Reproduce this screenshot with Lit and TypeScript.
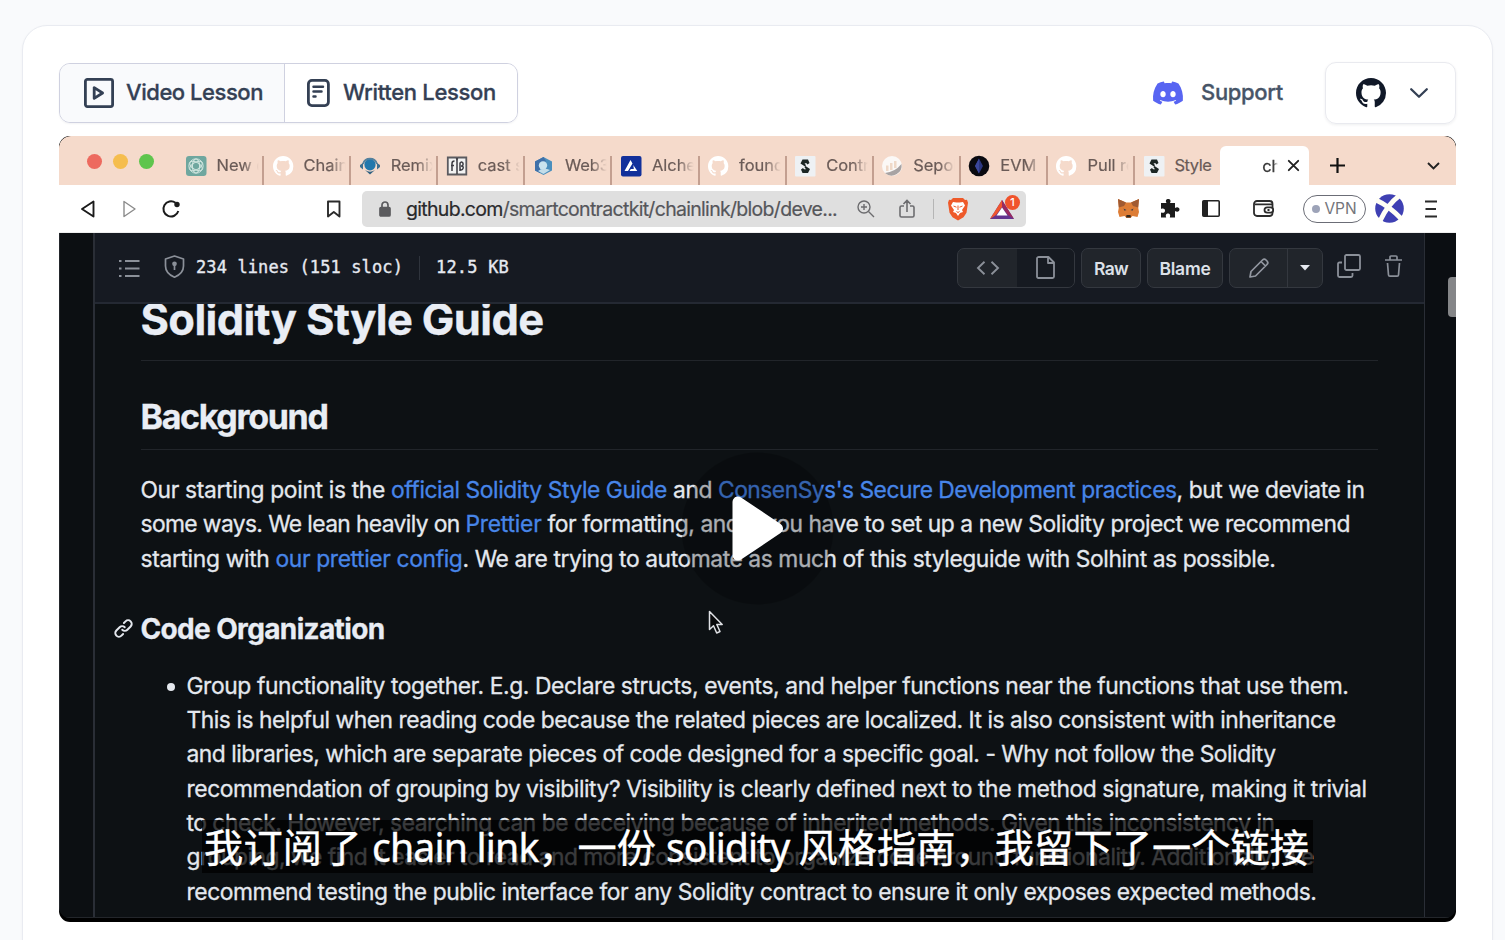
import { LitElement, html, css, svg } from "lit";
import { customElement } from "lit/decorators.js";

const GH =
  "M8 0C3.58 0 0 3.58 0 8c0 3.54 2.29 6.53 5.47 7.59.4.07.55-.17.55-.38 0-.19-.01-.82-.01-1.49-2.01.37-2.53-.49-2.69-.94-.09-.23-.48-.94-.82-1.13-.28-.15-.68-.52-.01-.53.63-.01 1.08.58 1.23.82.72 1.21 1.87.87 2.33.66.07-.52.28-.87.51-1.07-1.78-.2-3.64-.89-3.64-3.95 0-.87.31-1.59.82-2.15-.08-.2-.36-1.02.08-2.12 0 0 .67-.21 2.2.82.64-.18 1.32-.27 2-.27s1.36.09 2 .27c1.53-1.04 2.2-.82 2.2-.82.44 1.1.16 1.92.08 2.12.51.56.82 1.27.82 2.15 0 3.07-1.87 3.75-3.65 3.95.29.25.54.73.54 1.48 0 1.07-.01 1.93-.01 2.2 0 .21.15.46.55.38A8.01 8.01 0 0 0 16 8c0-4.42-3.58-8-8-8z";

const DISCORD =
  "M20.317 4.3698a19.7913 19.7913 0 00-4.8851-1.5152.0741.0741 0 00-.0785.0371c-.211.3753-.4447.8648-.6083 1.2495-1.8447-.2762-3.68-.2762-5.4868 0-.1636-.3933-.4058-.8742-.6177-1.2495a.077.077 0 00-.0785-.037 19.7363 19.7363 0 00-4.8852 1.515.0699.0699 0 00-.0321.0277C.5334 9.0458-.319 13.5799.0992 18.0578a.0824.0824 0 00.0312.0561c2.0528 1.5076 4.0413 2.4228 5.9929 3.0294a.0777.0777 0 00.0842-.0276c.4616-.6304.8731-1.2952 1.226-1.9942a.076.076 0 00-.0416-.1057c-.6528-.2476-1.2743-.5495-1.8722-.8923a.077.077 0 01-.0076-.1277c.1258-.0943.2517-.1923.3718-.2914a.0743.0743 0 01.0776-.0105c3.9278 1.7933 8.18 1.7933 12.0614 0a.0739.0739 0 01.0785.0095c.1202.099.246.1981.3728.2924a.077.077 0 01-.0066.1276 12.2986 12.2986 0 01-1.873.8914.0766.0766 0 00-.0407.1067c.3604.698.7719 1.3628 1.225 1.9932a.076.076 0 00.0842.0286c1.961-.6067 3.9495-1.5219 6.0023-3.0294a.077.077 0 00.0313-.0552c.5004-5.177-.8382-9.6739-3.5485-13.6604a.061.061 0 00-.0312-.0286zM8.02 15.3312c-1.1825 0-2.1569-1.0857-2.1569-2.419 0-1.3332.9555-2.4189 2.157-2.4189 1.2108 0 2.1757 1.0952 2.1568 2.419 0 1.3332-.9555 2.4189-2.1569 2.4189zm7.9748 0c-1.1825 0-2.1569-1.0857-2.1569-2.419 0-1.3332.9554-2.4189 2.1569-2.4189 1.2108 0 2.1757 1.0952 2.1568 2.419 0 1.3332-.946 2.4189-2.1568 2.4189Z";

const favicons: Record<string, unknown> = {
  gpt: svg`<rect width="20.5" height="20" rx="3" fill="#6fa79f"/><g fill="none" stroke="#cfe4de" stroke-width="1.100"><ellipse cx="10" cy="10" rx="3.6" ry="7"/><ellipse cx="10" cy="10" rx="3.6" ry="7" transform="rotate(60 10 10)"/><ellipse cx="10" cy="10" rx="3.6" ry="7" transform="rotate(120 10 10)"/><circle cx="10" cy="10" r="7.2" stroke-width=".9"/></g>`,
  gh: svg`<path transform="scale(1.27)" fill="#fff" d=${GH}/>`,
  remix: svg`<path d="M3 8a7.3 7.3 0 0 1 14 0" fill="none" stroke="#56809c" stroke-width="1.8"/><path d="M0 9l3-2v6.500L0 11zM20 9l-3-2v6.500L20 11z" fill="#3f6f8f"/><circle cx="10" cy="8.800" r="5.600" fill="#2277ac"/><path d="M5 14q5 3.500 10 0l-5 4.500z" fill="#2f6080"/>`,
  foundry: svg`<path d="M.8 1.500h8.500L10 3l.8-1.500h8.500v17H.8z" fill="#f2f2f2" stroke="#5b5a5f" stroke-width="1.800"/><path d="M10 2v16M5 15V7.500q0-2.500 2.500-2.500M4 9.500h3M13 15V7q2.500-2 3 .500t-2 2.500q3 0 2 2.500t-3 .500" fill="none" stroke="#3c3b41" stroke-width="1.500"/>`,
  web3: svg`<path d="M9.500 1l8.500 4.500v9L9.500 19 1 14.500v-9z" fill="#4b8fbd"/><path d="M1 5.500L9.500 1 12 5 6 8v9l-5-2.500z" fill="#3f70a9"/><circle cx="9" cy="9.500" r="4.200" fill="#c9e3ee"/><path d="M4 15q5-4 12-1l-6.500 4z" fill="#c3dde9"/>`,
  alchemy: svg`<rect width="20.500" height="20.500" rx="2" fill="#12309b"/><path d="M9.500 4l2 3.500L7 15H3.500zM12.300 9l4 6H8.500l1.300-2h3z" fill="#fff"/>`,
  sol: svg`<rect width="20.500" height="20.500" rx="1" fill="#eef1f4"/><path d="M7.500 3.500h5.500L14.500 7l-2 1.500-1-1.200H9.500L11 9.300l-1 1.300L5.500 7.500zM13 17H7.500L6 13.500l2-1.500 1 1.200h2L9.500 11.200l1-1.300 4.500 3.100z" fill="#1c2624"/>`,
  sepolia: svg`<circle cx="10" cy="10" r="10" fill="#fbf8f6"/><path d="M3 17q10-1 16.500-9A10 10 0 0 1 3 17z" fill="#a8a3a3"/><path d="M4 9.500h2.500V15H4zM8 7h2.500v7H8zM12 5h2.500v7H12z" fill="#efd9c8"/>`,
  evm: svg`<circle cx="10" cy="10" r="10.300" fill="#0a0a10"/><path d="M10 2.500l4 7.500-4 7.500L6 10z" fill="#2c3780"/><path d="M10 2.500V17.500L6 10z" fill="#3b479b"/>`,
};

const tabs: [string, string][] = [
  ["gpt", "New c"],
  ["gh", "Chain"],
  ["remix", "Remix"],
  ["foundry", "cast s"],
  ["web3", "Web3"],
  ["alchemy", "Alche"],
  ["gh", "found"],
  ["sol", "Contr"],
  ["sepolia", "Sepol"],
  ["evm", "EVM C"],
  ["gh", "Pull re"],
  ["sol", "Style"],
];

const listLines: [string, number][] = [
  ["Group functionality together. E.g. Declare structs, events, and helper functions near the functions that use them.", 1162],
  ["This is helpful when reading code because the related pieces are localized. It is also consistent with inheritance", 1149],
  ["and libraries, which are separate pieces of code designed for a specific goal. - Why not follow the Solidity", 1089],
  ["recommendation of grouping by visibility? Visibility is clearly defined next to the method signature, making it trivial", 1180],
  ["to check. However, searching can be deceiving because of inherited methods. Given this inconsistency in", 1088],
  ["grouping, we find it easier to read and more consistent to organize code around functionality. Additionally, we", 1127],
  ["recommend testing the public interface for any Solidity contract to ensure it only exposes expected methods.", 1130],
];

/** A single run of text tracked so that it fills a given measure. */
const fit = (content: unknown, width: number) =>
  html`<span class="fit" data-w=${width}>${content}</span>`;

@customElement("app-root")
export class AppRoot extends LitElement {
  static styles = css`
    :host { display: block; height: 940px; overflow: hidden; background: #f9fafc; font-family: Inter, "Liberation Sans", sans-serif; }
    * { box-sizing: border-box; }
    svg { display: block; flex: none; overflow: visible; }
    .fit { display: inline-block; white-space: pre; }
    .card { margin: 25px 12px 0 22px; height: 960px; background: #fff; border: 1px solid #e9ebf1; border-radius: 25px; padding: 36px 36px 0; box-shadow: 0 1px 3px rgba(16, 24, 40, 0.04); }
    .bar { display: flex; justify-content: space-between; align-items: center; height: 62px; color: #344054; font-size: 22px; font-weight: 500; }
    .bar .fit { padding-bottom: 2px; -webkit-text-stroke: 0.300px currentColor; }
    .group { display: flex; height: 60px; width: 459px; border: 1px solid #cfd1e0; border-radius: 11px; overflow: hidden; box-shadow: 0 1px 2px rgba(16, 24, 40, 0.05); }
    .seg { display: flex; align-items: center; padding-left: 24px; gap: 12px; width: 225px; background: #f9fafc; border-right: 1px solid #cfd1e0; }
    .seg.alt { background: #fff; border: 0; width: auto; flex: 1; padding-left: 20.500px; gap: 13.500px; }
    .right { display: flex; align-items: center; }
    .support { display: flex; align-items: center; gap: 18px; margin-right: 42px; color: #475467; }
    .ghbtn { width: 131px; height: 62px; border: 1px solid #e9eaef; border-radius: 11px; display: flex; align-items: center; padding-left: 30px; gap: 24px; box-shadow: 0 1px 3px rgba(16, 24, 40, 0.07); }

    .video { position: relative; margin-top: 12px; height: 786px; width: 1397px; border-radius: 11px; overflow: hidden; background: #000; }
    .frame { height: 782px; border-radius: 12px 12px 11px 11px; overflow: hidden; background: #0d1114; display: flex; flex-direction: column; }
    .strip { height: 49px; background: #f5dacb; display: flex; flex: none; align-items: flex-end; }
    .lights { display: flex; gap: 11px; padding-left: 27.500px; width: 118px; flex: none; align-self: flex-start; margin-top: 18px; }
    .light { width: 15px; height: 15px; border-radius: 50%; background: #ed6a5f; }
    .light.y { background: #f5bd4e; }
    .light.g { background: #5fc54d; }
    .tab { width: 87.100px; height: 29px; padding-left: 8.500px; border-right: 2px solid #c39f90; display: flex; gap: 11px; font-size: 16.500px; color: #6a5b57; flex: none; }
    .tab.last { border-color: transparent; }
    .tab span { width: 44px; line-height: 19px; white-space: pre; letter-spacing: -0.050px; -webkit-text-stroke: 0.200px currentColor; mask-image: linear-gradient(90deg, #000 60%, transparent 95%); -webkit-mask-image: linear-gradient(90deg, #000 60%, transparent 95%); }
    .tab.last span { letter-spacing: -0.500px; mask-image: none; -webkit-mask-image: none; }
    .active { width: 89px; height: 39px; margin-left: -2px; background: #fff; border-radius: 6px 6px 0 0; display: flex; align-items: center; padding-left: 42px; gap: 10px; font-size: 16.500px; color: #333; flex: none; }
    .active span { width: 16px; overflow: hidden; white-space: pre; -webkit-text-stroke: 0.300px currentColor; mask-image: linear-gradient(90deg, #000 70%, transparent); -webkit-mask-image: linear-gradient(90deg, #000 70%, transparent); }
    .plus { margin: 0 0 12px 21px; }
    .down { margin: 0 16px 15px auto; }

    .tools { height: 48px; background: #fff; display: flex; align-items: center; flex: none; padding-left: 22px; border-bottom: 1px solid #eee; color: #222; }
    .tool-next { margin-left: 28px; }
    .tool-reload { margin-left: 25px; }
    .tool-mark { margin-left: 147px; }
    .tool-share { margin-left: 24px; }
    .tool-fox { margin-left: 92px; }
    .tool-puzzle { margin-left: 21px; }
    .tool-side { margin-left: 22px; }
    .tool-wallet { margin-left: 33px; }
    .tool-avatar { margin-left: 9px; }
    .tool-menu { margin-left: 21.500px; }
    .url { width: 664px; height: 36px; margin-left: 22px; background: #dfdfdf; border-radius: 5px; display: flex; align-items: center; padding-left: 17px; color: #55565a; font-size: 19.500px; flex: none; -webkit-text-stroke: 0.200px currentColor; }
    .url .addr { margin-left: 15px; width: 451px; }
    .url b { font-weight: 400; color: #29292b; }
    .sep { width: 1px; height: 20px; background: #b5b5b5; margin: 0 14px 0 18px; }
    .bat { position: relative; margin-left: 22px; }
    .badge { position: absolute; left: 15px; top: -3px; width: 15px; height: 15px; border-radius: 50%; background: #f0532c; color: #fff; font-size: 11px; line-height: 15px; text-align: center; }
    .vpn { width: 63px; height: 28px; margin-left: 28.500px; border: 1.500px solid #6b6d76; border-radius: 14px; display: flex; align-items: center; gap: 5px; padding-left: 8px; font-size: 15.500px; color: #74757b; flex: none; }
    .dot { width: 8px; height: 8px; border-radius: 50%; background: #9da3b8; }

    .page { flex: 1; display: flex; position: relative; border: solid #23262b; border-width: 0 0 1px 1px; }
    .side { width: 33px; background: #0c0f12; }
    .doc { width: 1332px; border: solid #2a2e36; border-width: 0 1px 0 2px; display: flex; flex-direction: column; overflow: hidden; }
    .gutter { flex: 1; background: #0b0e12; }
    .thumb { position: absolute; right: 0; top: 44px; width: 8px; height: 40px; border-radius: 4px 0 0 4px; background: #858688; }
    .head { height: 71px; flex: none; background: #161a22; border-bottom: 2px solid #242933; display: flex; align-items: center; padding-left: 24px; color: #8b9099; }
    .mono { font: 17px "DejaVu Sans Mono", monospace; color: #e6e9f0; -webkit-text-stroke: 0.350px #e6e9f0; padding-bottom: 1px; }
    .head .vr { width: 1px; height: 24px; margin: 0 16px; background: #2f343d; }
    .shield { margin: -3px 11px 0 24px; }
    .copy { margin: -3px 0 0 14px; }
    .trash { margin: -3px 0 0 24px; }
    .btn { height: 40px; border: 1px solid #34383f; border-radius: 7px; background: #21252b; color: #dde1e8; font-weight: 600; font-size: 17.500px; display: flex; align-items: center; justify-content: center; margin-left: 6px; flex: none; overflow: hidden; }
    .btn .fit { padding-top: 1px; }
    .btn.view { width: 118px; margin-left: 448px; }
    .btn.raw { width: 60px; }
    .btn.blame { width: 76px; }
    .btn.edit { width: 94px; }
    .half { height: 100%; display: flex; align-items: center; justify-content: center; }
    .code { width: 59px; }
    .file { flex: 1; background: #161a21; }
    .pen { width: 58px; border-right: 1px solid #34383f; }
    .caret { flex: 1; }

    .md { flex: 1; overflow: hidden; padding: 0 46px 0 45.500px; color: #e4e8ee; font-size: 22.800px; line-height: 34.350px; -webkit-text-stroke: 0.300px currentColor; }
    h1, h2, h3, p { margin: 0; color: #e9edf4; }
    h1, h2, h3 { font-weight: 650; }
    p { color: #e4e8ee; }
    h1 { font-size: 43.500px; line-height: 50px; margin-top: -10px; padding-bottom: 16px; border-bottom: 1px solid #21252a; }
    h2 { font-size: 34px; line-height: 44px; margin-top: 34px; padding-bottom: 10px; border-bottom: 1px solid #21252a; }
    p { margin-top: 23px; }
    .line { display: block; height: 34.350px; }
    .link { color: #4785e8; }
    h3 { display: flex; align-items: center; gap: 7px; margin: 34.500px 0 0 -28px; font-size: 28px; line-height: 36px; }
    .item { display: flex; margin-top: 22px; padding-left: 26.500px; gap: 11.500px; }
    .bullet { width: 8px; height: 8px; border-radius: 50%; background: #e4e8ee; margin-top: 14px; }

    .overlay { position: absolute; left: 622px; top: 316px; }
    .cursor { position: absolute; left: 649px; top: 474px; }
    .caption { position: absolute; left: 143px; top: 684px; width: 1111px; height: 53px; padding-left: 2px; background: rgba(0, 0, 0, 0.75); color: #fff; font: 39.200px/53px "Noto Sans", "Noto Sans CJK SC", sans-serif; white-space: nowrap; -webkit-text-stroke: 0.400px #fff; }
  `;

  firstUpdated() {
    this.renderRoot.querySelectorAll<HTMLElement>(".fit").forEach((el) => {
      const target = Number(el.dataset.w);
      const chars = (el.textContent ?? "").length;
      const natural = el.getBoundingClientRect().width;
      el.style.letterSpacing = `${(target - natural) / chars}px`;
    });
  }

  private topBar() {
    return html`<div class="bar">
      <div class="group">
        <div class="seg">
          <svg width="30" height="30" fill="none" stroke="#344054" stroke-width="2.800" stroke-linejoin="round"><rect x="1.400" y="1.400" width="27.200" height="27.200" rx="2"/><path d="M10.200 9.600v10.800l8.400-5.400z"/></svg>
          ${fit("Video Lesson", 137)}
        </div>
        <div class="seg alt">
          <svg width="24" height="30" fill="none" stroke="#344054" stroke-width="2.800" stroke-linecap="round"><rect x="2.400" y="2.400" width="20" height="25.200" rx="3.500"/><path d="M7.500 8.800h9.500M7.500 13.600h8M7.500 18.600h2" stroke-width="2.500"/></svg>
          ${fit("Written Lesson", 153)}
        </div>
      </div>
      <div class="right">
        <div class="support">
          <svg width="30" height="30" viewBox="0 0 24 24"><path fill="#5865f2" d=${DISCORD}/></svg>
          ${fit("Support", 82)}
        </div>
        <div class="ghbtn">
          <svg width="30" height="30" viewBox="0 0 16 16"><path fill="#101828" d=${GH}/></svg>
          <svg width="18" height="10" fill="none" stroke="#344054" stroke-width="2.300" stroke-linecap="round" stroke-linejoin="round"><path d="M1.200 1.200L9 8.800l7.800-7.600"/></svg>
        </div>
      </div>
    </div>`;
  }

  private tabStrip() {
    return html`<div class="strip">
      <div class="lights"><i class="light"></i><i class="light y"></i><i class="light g"></i></div>
      ${tabs.map(
        ([icon, label], i) => html`<div class="tab ${i === tabs.length - 1 ? "last" : ""}">
          <svg width="20" height="20">${favicons[icon]}</svg><span>${label}</span>
        </div>`
      )}
      <div class="active"><span>ch</span>
        <svg width="11" height="11" stroke="#222" stroke-width="1.900" stroke-linecap="round"><path d="M.8.800l9.400 9.400M10.200.800L.8 10.200"/></svg>
      </div>
      <svg class="plus" width="15" height="15" stroke="#111" stroke-width="2.200"><path d="M7.500 0v15M0 7.500h15"/></svg>
      <svg class="down" width="13" height="8" fill="none" stroke="#222" stroke-width="1.900"><path d="M1 1l5.500 5.500L12 1"/></svg>
    </div>`;
  }

  private toolbar() {
    return html`<div class="tools">
      <svg width="14" height="18" fill="none" stroke="#1b1b1b" stroke-width="1.900" stroke-linejoin="round"><path d="M12.500 1.500v15L1 9z"/></svg>
      <svg class="tool-next" width="14" height="18" fill="none" stroke="#8c8c8c" stroke-width="1.400" stroke-linejoin="round"><path d="M1 1.500v15L12 9z"/></svg>
      <svg class="tool-reload" width="18" height="18" fill="none" stroke="#1b1b1b" stroke-width="2"><path d="M13.500 2.800A7.600 7.600 0 1 0 16.300 11"/><circle cx="15" cy="4.500" r="2.700" fill="#1b1b1b" stroke="none"/></svg>
      <svg class="tool-mark" width="13" height="18" fill="none" stroke="#2b2b2b" stroke-width="1.900" stroke-linejoin="round"><path d="M1 1.500h11.500v15L6.800 12 1 16.500z"/></svg>
      <div class="url">
        <svg width="12" height="16" fill="none" stroke="#5b5b5e" stroke-width="1.700"><rect x="1" y="6.500" width="10" height="8.500" rx="1" fill="#5b5b5e"/><path d="M3 7V4a3 3 0 0 1 6 0v3"/></svg>
        <span class="addr">${fit(html`<b>github.com</b>/smartcontractkit/chainlink/blob/deve...`, 431)}</span>
        <svg width="18" height="18" fill="none" stroke="#6c6c6f" stroke-width="1.400"><circle cx="7" cy="7" r="6"/><path d="M11.500 11.500L17 17M4 7h6M7 4v6"/></svg>
        <svg class="tool-share" width="16" height="20" fill="none" stroke="#6c6c6f" stroke-width="1.600"><path d="M5 7H2.500Q1 7 1 8.500v8Q1 18 2.500 18h11q1.500 0 1.500-1.500v-8Q15 7 13.500 7H11M8 13V1.500M4.500 5L8 1.500 11.500 5"/></svg>
        <i class="sep"></i>
        <svg width="20" height="24"><path d="M5 1h10l2 2 2-.2 1 3-1.500 10-3 4.500L10 23.500l-5.500-3.200-3-4.500L0 5.800l1-3L3 3z" fill="#ee5a2a"/><path d="M5 5l3.500.5h3L15 5l2 3.500-3 4.500 1 2-3 1-2 3-2-3-3-1 1-2-3-4.500z" fill="#fff"/><path d="M5.500 9l3 1.200M14.500 9l-3 1.200M10 8.500v4.500M8.500 14.500l1.500 1 1.500-1" stroke="#ee5a2a" fill="none" stroke-width="1"/></svg>
        <div class="bat">
          <svg width="24" height="21" viewBox="0 1 24 21"><path d="M12 3L0 22h24z" fill="#63348f"/><path d="M12 3L0 22l6-4 6-8z" fill="#f0552f"/><path d="M12 3l12 19-6-4-6-8z" fill="#9a2a5f"/><path d="M12 10.500L6.500 18.500h11z" fill="#fff"/></svg>
          <span class="badge">1</span>
        </div>
      </div>
      <svg class="tool-fox" width="21" height="19"><path d="M0 0l8 3.500h5L21 0l-.8 8.500.8 4.500-1.500 5-5-1-2 2H8.500l-2-2-5 1L0 13l.8-4.500z" fill="#dd7d36"/><path d="M0 0l8 3.500L6 7 .8 8.500zM21 0l-8 3.500L15 7l5.200 1.500z" fill="#a05a32"/><path d="M8.500 16h4l.5 2.500H8z" fill="#33291f"/><path d="M5.500 9.500l3 1.500-2 .8zM15.500 9.500l-3 1.500 2 .8z" fill="#3a3d4a"/></svg>
      <svg class="tool-puzzle" width="20" height="19"><path d="M1 4h5.500C5 1.500 6.500 0 8.200 0S11.500 1.500 10 4H15v5c2.500-1.500 4.500-.3 4.500 1.500s-2 3-4.500 1.500V18.500H9.800c1-2.800-.3-4-1.800-4s-2.800 1.200-1.800 4H1v-5c2.500 1 4-.2 4-1.800S3.500 9 1 10z" fill="#1c1c1c"/></svg>
      <svg class="tool-side" width="18" height="17" fill="none" stroke="#222" stroke-width="1.600"><rect x=".8" y=".8" width="16.400" height="15.400" rx="1"/><rect x="1" y="1" width="5" height="15" fill="#222" stroke="none"/></svg>
      <svg class="tool-wallet" width="21" height="17" fill="none" stroke="#2b2b2b" stroke-width="1.800"><rect x="1" y="1" width="18.500" height="15" rx="3"/><path d="M2 4.300h17" stroke-width="1.800"/><rect x="11.500" y="7.300" width="8.700" height="5.400" rx="2.700" fill="#fff"/><path d="M14.500 10h2"/></svg>
      <div class="vpn"><i class="dot"></i>${fit("VPN", 32)}</div>
      <svg class="tool-avatar" width="29" height="29"><circle cx="14.500" cy="14.500" r="14.300" fill="#3f40b3"/><path d="M1 6Q14 12 26.500 25M24 2Q13 10 5 27" fill="none" stroke="#fffef5" stroke-width="4.800"/></svg>
      <svg class="tool-menu" width="12" height="18" stroke="#2b2b2b" stroke-width="1.900"><path d="M0 1.500h12M.5 9H11M0 16.500h12"/></svg>
    </div>`;
  }

  private docHead() {
    return html`<div class="head">
      <svg width="21" height="18" fill="none" stroke="currentColor" stroke-width="1.900"><path d="M6 2h14.500M6 9.500h14.500M6 17h14.500M0 2h2.500M0 9.500h2.500M0 17h2.500"/></svg>
      <svg class="shield" width="21" height="23" fill="none" stroke="currentColor" stroke-width="1.700" stroke-linejoin="round"><path d="M10.500 1l9 3v7q0 7.500-9 11.200Q1.500 18.500 1.500 11V4z"/><circle cx="10.500" cy="8.800" r="1.500" fill="currentColor"/><path d="M10.500 9v6"/></svg>
      <span class="mono">${fit("234 lines (151 sloc)", 207)}</span>
      <i class="vr"></i>
      <span class="mono">${fit("12.5 KB", 73)}</span>
      <div class="btn view">
        <div class="half code"><svg width="22" height="14" fill="none" stroke="#8b9099" stroke-width="1.900"><path d="M7.500.800L1 7l6.500 6.200M14.500.800L21 7l-6.500 6.200"/></svg></div>
        <div class="half file"><svg width="19" height="23" fill="none" stroke="#8b9099" stroke-width="1.800" stroke-linejoin="round"><path d="M3 1h9.500L18 6.500V20.500q0 1.500-1.500 1.500h-14Q1 22 1 20.500V2.500Q1 1 3 1M12 1v6h6"/></svg></div>
      </div>
      <div class="btn raw">${fit("Raw", 34)}</div>
      <div class="btn blame">${fit("Blame", 51)}</div>
      <div class="btn edit">
        <div class="half pen"><svg width="20" height="20" fill="none" stroke="#9297a0" stroke-width="1.700" stroke-linejoin="round"><path d="M1 19l1-5.500L13.500 2q1.800-1.700 3.500 0l1 1q1.700 1.800 0 3.500L6.500 18zM12 3.500L16.500 8"/></svg></div>
        <div class="half caret"><svg width="10" height="6"><path d="M0 0h10L5 5.500z" fill="#e6e9f0"/></svg></div>
      </div>
      <svg class="copy" width="24" height="24" fill="none" stroke="currentColor" stroke-width="1.800" stroke-linejoin="round"><rect x="8" y="1" width="15" height="15" rx="1.500"/><path d="M5 8.500H2.500Q1 8.500 1 10v11.500Q1 23 2.500 23H14q1.500 0 1.500-1.500V19"/></svg>
      <svg class="trash" width="17" height="22" fill="none" stroke="currentColor" stroke-width="1.700" stroke-linejoin="round"><path d="M0 5h17M5 5V2q0-1 1-1h5q1 0 1 1v3M2.500 8l1 12q.1 1.200 1.300 1.200h7.400q1.200 0 1.300-1.200l1-12"/></svg>
    </div>`;
  }

  private docBody() {
    const a = (t: string, w: number) => html`<span class="link">${fit(t, w)}</span>`;
    return html`<div class="md">
      <h1>${fit("Solidity Style Guide", 403)}</h1>
      <h2>${fit("Background", 187)}</h2>
      <p>
        <span class="line">${fit("Our starting point is the ", 250.5)}${a("official Solidity Style Guide", 276)}${fit(" and ", 51)}${a("ConsenSys's Secure Development practices", 458.5)}${fit(", but we deviate in", 188)}</span>
        <span class="line">${fit("some ways. We lean heavily on ", 325)}${a("Prettier", 76)}${fit(" for formatting, and if you have to set up a new Solidity project we recommend", 808.5)}</span>
        <span class="line">${fit("starting with ", 135)}${a("our prettier config", 187)}${fit(". We are trying to automate as much of this styleguide with Solhint as possible.", 813)}</span>
      </p>
      <h3>
        <svg width="21" height="21" viewBox="0 0 16 16"><path fill="#e4e8ee" d="M7.775 3.275a.75.75 0 0 0 1.060 1.060l1.250-1.250a2 2 0 1 1 2.830 2.830l-2.500 2.500a2 2 0 0 1-2.830 0 .75.75 0 0 0-1.060 1.060 3.500 3.500 0 0 0 4.950 0l2.500-2.500a3.500 3.500 0 0 0-4.950-4.950l-1.250 1.250zm-4.690 9.640a2 2 0 0 1 0-2.830l2.500-2.500a2 2 0 0 1 2.830 0 .75.75 0 0 0 1.060-1.060 3.500 3.500 0 0 0-4.950 0l-2.500 2.500a3.500 3.500 0 0 0 4.950 4.950l1.250-1.250a.75.75 0 0 0-1.060-1.060l-1.250 1.250a2 2 0 0 1-2.830 0z"/></svg>
        ${fit("Code Organization", 244)}
      </h3>
      <div class="item">
        <i class="bullet"></i>
        <div>${listLines.map(([t, w]) => html`<span class="line">${fit(t, w)}</span>`)}</div>
      </div>
    </div>`;
  }

  render() {
    return html`<div class="card">
      ${this.topBar()}
      <div class="video">
        <div class="frame">
          ${this.tabStrip()} ${this.toolbar()}
          <div class="page">
            <div class="side"></div>
            <div class="doc">${this.docHead()} ${this.docBody()}</div>
            <div class="gutter"></div>
            <i class="thumb"></i>
          </div>
        </div>
        <svg class="cursor" width="16" height="25"><path d="M1.500 1.500v18l4-3.700 3.200 7.200 3.300-1.500-3.200-7h5.400z" fill="#08090b" stroke="#dfe1e5" stroke-width="1.500" stroke-linejoin="round"/></svg>
        <svg class="overlay" width="153" height="153"><circle cx="76.500" cy="76.500" r="76" fill="rgba(0,0,0,.25)"/><path d="M57 50v53L96.500 76.500z" fill="#fff" stroke="#fff" stroke-width="11" stroke-linejoin="round"/></svg>
        <div class="caption">${fit("我订阅了 ", 168)}${fit("chain link", 166.5)}${fit("，一份 ", 127.5)}${fit("solidity ", 132.5)}${fit("风格指南，我留下了一个链接", 510.5)}</div>
      </div>
    </div>`;
  }
}
